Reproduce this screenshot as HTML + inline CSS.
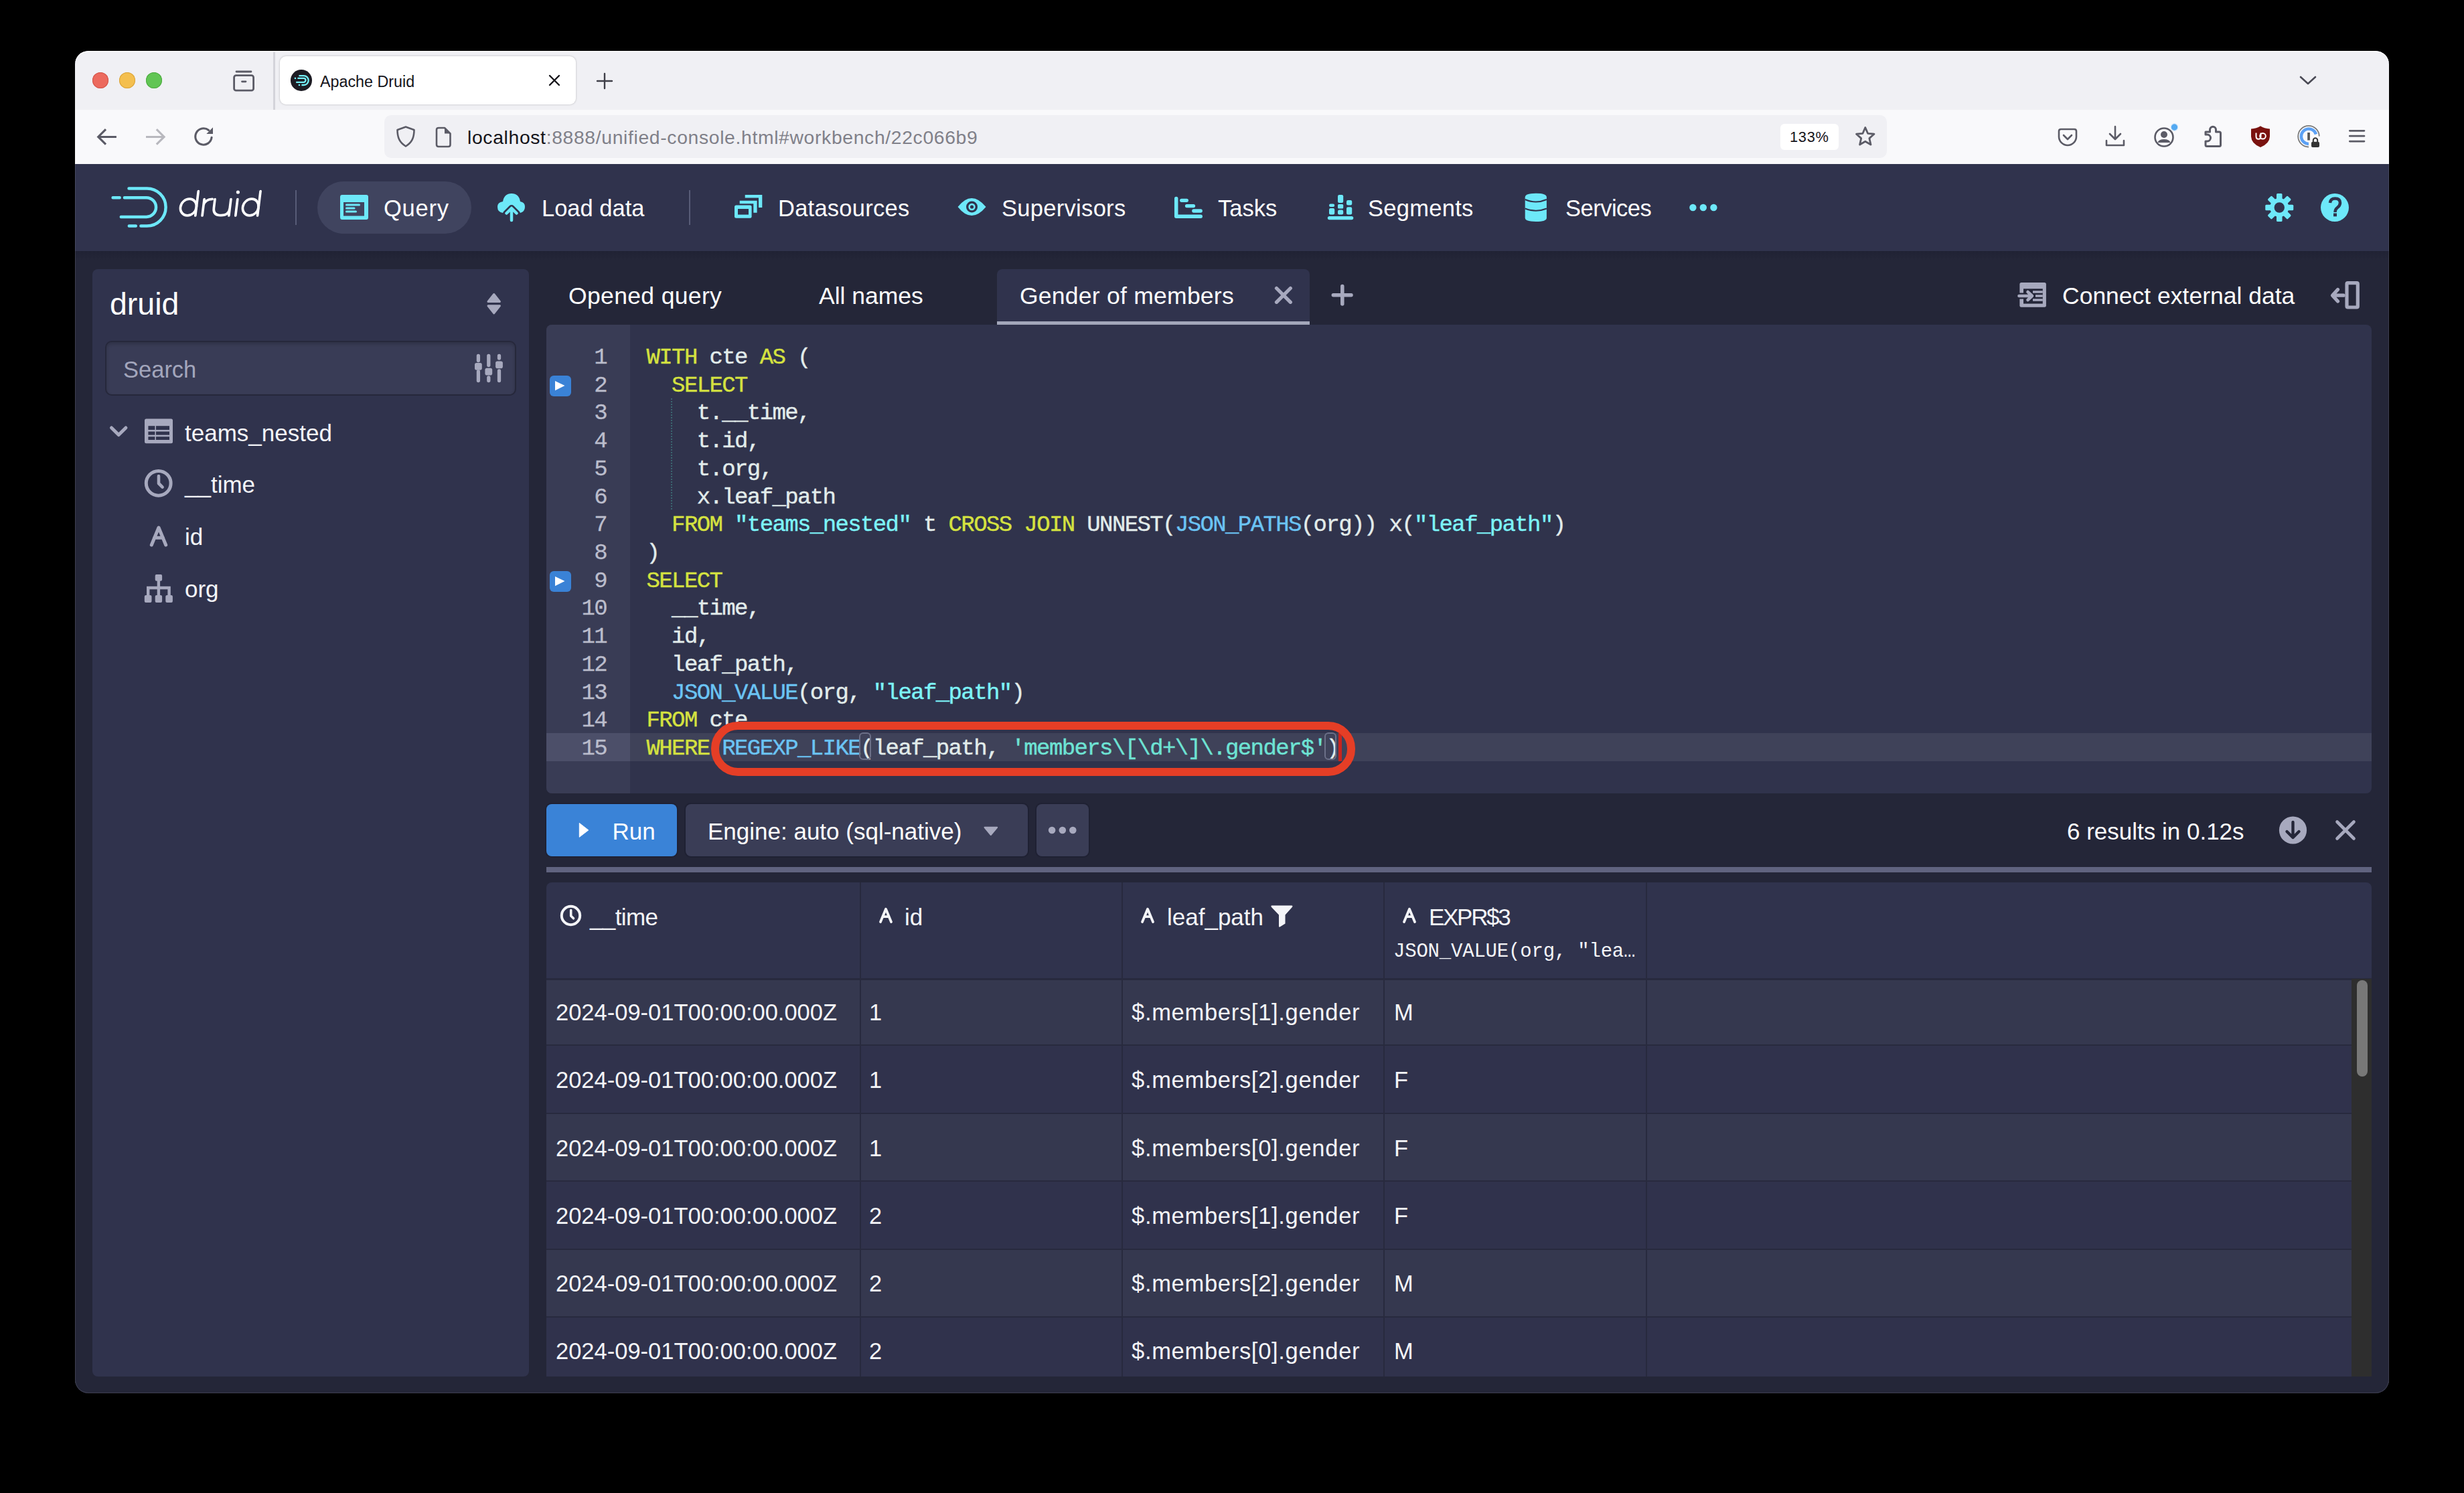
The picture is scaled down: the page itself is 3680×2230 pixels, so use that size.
<!DOCTYPE html>
<html><head><meta charset="utf-8">
<style>
*{box-sizing:border-box;margin:0;padding:0}
html,body{width:3680px;height:2230px;background:#000;overflow:hidden;font-family:"Liberation Sans",sans-serif;-webkit-font-smoothing:antialiased}
#win{position:absolute;left:112px;top:76px;width:3456px;height:2005px;border-radius:20px;overflow:hidden;background:#242638}
#pg{position:absolute;left:-112px;top:-76px;width:3680px;height:2230px}
.a{position:absolute}
.t{position:absolute;white-space:pre;line-height:1}
.mono{font-family:"Liberation Mono",monospace}
svg{position:absolute;overflow:visible}
.side{font-size:35px;color:#F4F5F8}
.tab{top:424.5px;font-size:35.5px;color:#fff}
.ln{left:797px;width:109px;text-align:right;font-size:34px;color:#BBBDCC}
.code{left:965.5px;font-size:34px;letter-spacing:-1.61px;color:#E2ECEB;-webkit-text-stroke:0.4px currentColor;margin-top:-1px}
.ck{color:#D5E240}.ci{color:#E2ECEB}.cf{color:#6BC4F4}.cs{color:#7DF4F8}.cq{color:#6EE3D4}
.ln{letter-spacing:-1.61px;-webkit-text-stroke:0.3px currentColor;margin-top:-1px}
.btn{top:1223.5px;font-size:35px;color:#fff}
.th{top:1352px;font-size:35px;color:#F4F5F8}
.td{font-size:34.5px;color:#F4F5F8}
.nav{top:294px;font-size:34.5px;color:#fff}
</style></head>
<body>
<div id="win"><div id="pg">
<!-- ===== browser chrome ===== -->
<div class="a" style="left:112px;top:76px;width:3456px;height:88px;background:#F0F0F4"></div>
<div class="a" style="left:112px;top:164px;width:3456px;height:81px;background:#F9F9FB"></div>
<!-- traffic lights -->
<div class="a" style="left:138px;top:108px;width:24px;height:24px;border-radius:50%;background:#EC6A5E;box-shadow:inset 0 0 0 1px #D2554A"></div>
<div class="a" style="left:178px;top:108px;width:24px;height:24px;border-radius:50%;background:#F4BF4F;box-shadow:inset 0 0 0 1px #D9A33A"></div>
<div class="a" style="left:218px;top:108px;width:24px;height:24px;border-radius:50%;background:#61C554;box-shadow:inset 0 0 0 1px #4DAA40"></div>
<!-- sidebar toggle icon -->
<svg style="left:344px;top:100px" width="40" height="40" viewBox="344 100 40 40"><path d="M353 107 H375" stroke="#5B5B66" stroke-width="2.8" stroke-linecap="round"/><rect x="349.6" y="112.6" width="29" height="22.6" rx="3" fill="none" stroke="#5B5B66" stroke-width="2.8"/><path d="M361.5 121.8 H367" stroke="#5B5B66" stroke-width="2.8" stroke-linecap="round"/></svg>
<div class="a" style="left:408px;top:77px;width:3px;height:87px;background:#D4D4DA"></div>
<!-- active tab -->
<div class="a" style="left:418px;top:84px;width:442px;height:72px;border-radius:9px;background:#FFFFFF;box-shadow:0 0 3px rgba(0,0,0,0.25)"></div>
<div class="a" style="left:434px;top:104px;width:31.7px;height:31.7px;border-radius:50%;background:#1D1C24"></div>
<svg style="left:434px;top:104px" width="32" height="32" viewBox="0 0 32 32"><path d="M12.4 9.1 H19.75 A6.95 6.95 0 0 1 19.75 23 H16.4 M10.4 12.9 H19.55 A2.95 2.95 0 0 1 19.55 18.8 H8.2" fill="none" stroke="#74F0F8" stroke-width="2.3"/><rect x="5.8" y="11.75" width="2.3" height="2.3" fill="#74F0F8"/><rect x="11.8" y="21.85" width="2.3" height="2.3" fill="#74F0F8"/></svg>
<div class="t" style="left:478px;top:111px;font-size:23.3px;color:#15141A">Apache Druid</div>
<svg style="left:819px;top:111px" width="18" height="18" viewBox="0 0 18 18"><path d="M2 2 L16 16 M16 2 L2 16" stroke="#15141A" stroke-width="2.4" stroke-linecap="round"/></svg>
<svg style="left:890px;top:108px" width="26" height="26" viewBox="0 0 26 26"><path d="M13 2 V24 M2 13 H24" stroke="#3F3F48" stroke-width="2.4" stroke-linecap="round"/></svg>
<!-- tab list chevron -->
<svg style="left:3434px;top:112px" width="26" height="16" viewBox="0 0 26 16"><path d="M2 3 L13 13 L24 3" fill="none" stroke="#4A4A55" stroke-width="2.6" stroke-linecap="round" stroke-linejoin="round"/></svg>
<!-- nav buttons -->
<svg style="left:140px;top:188px" width="40" height="32" viewBox="140 188 40 32"><path d="M173.9 204.5 H147.5 M158 193.1 L146.7 204.4 L158 215.7" fill="none" stroke="#5B5B66" stroke-width="3.1" stroke-linejoin="miter"/></svg>
<svg style="left:214px;top:188px" width="40" height="32" viewBox="214 188 40 32"><path d="M218 204.5 H244.3 M233.8 193.1 L245.1 204.4 L233.8 215.7" fill="none" stroke="#B8B8BE" stroke-width="3.1"/></svg>
<svg style="left:286px;top:186px" width="38" height="36" viewBox="286 186 38 36"><path d="M316.1 205.2 A12.2 12.2 0 1 1 311.7 194.5" fill="none" stroke="#5B5B66" stroke-width="3.1" stroke-linecap="round"/><path d="M318 190.3 V200 H308.3 Z" fill="#5B5B66"/></svg>
<!-- url bar -->
<div class="a" style="left:574px;top:172px;width:2244px;height:64px;border-radius:10px;background:#F0F0F4"></div>
<svg style="left:590px;top:187px" width="32" height="34" viewBox="0 0 32 34"><path d="M16 2.5 L28.5 7 C28.5 19 25 26 16 31.5 C7 26 3.5 19 3.5 7 Z" fill="none" stroke="#5B5B66" stroke-width="2.6" stroke-linejoin="round"/></svg>
<svg style="left:649px;top:189px" width="26" height="32" viewBox="0 0 26 32"><path d="M3 5 Q3 2 6 2 H15 L23.5 10.5 V27 Q23.5 30 20.5 30 H6 Q3 30 3 27 Z" fill="none" stroke="#5B5B66" stroke-width="2.6" stroke-linejoin="round"/><path d="M15 2 V10.5 H23.5" fill="#5B5B66"/></svg>
<div class="t" style="left:698px;top:191px;font-size:28.3px;letter-spacing:0.66px;color:#15141A">localhost<span style="color:#808089">:8888/unified-console.html#workbench/22c066b9</span></div>
<div class="a" style="left:2659px;top:185px;width:87px;height:39px;border-radius:6px;background:#FFFFFF"></div>
<div class="t" style="left:2673px;top:194px;font-size:21.8px;letter-spacing:0.7px;color:#15141A">133%</div>
<svg style="left:2768px;top:187px" width="34" height="34" viewBox="0 0 34 34"><path d="M17.8 3.5 L21.6 12.3 L31 13.2 L23.9 19.6 L26 29 L17.8 24.2 L9.6 29 L11.7 19.6 L4.6 13.2 L14 12.3 Z" fill="none" stroke="#5B5B66" stroke-width="2.8" stroke-linejoin="round"/></svg>
<!-- toolbar icons right -->
<svg style="left:3071px;top:189px" width="34" height="34" viewBox="0 0 34 34"><path d="M4 7 Q4 4 7 4 H27 Q30 4 30 7 V15 A13 13 0 0 1 4 15 Z M11 13 L17 19 L23 13" fill="none" stroke="#5B5B66" stroke-width="2.6" stroke-linejoin="round" stroke-linecap="round"/></svg>
<svg style="left:3142px;top:186px" width="34" height="36" viewBox="0 0 34 36"><path d="M17 3 V22 M9 14 L17 22 L25 14 M4 24 V31 H30 V24" fill="none" stroke="#5B5B66" stroke-width="2.6" stroke-linejoin="round" stroke-linecap="round"/></svg>
<svg style="left:3216px;top:187px" width="34" height="34" viewBox="0 0 34 34"><circle cx="16" cy="18" r="13.5" fill="none" stroke="#5B5B66" stroke-width="2.6"/><circle cx="16" cy="14" r="5" fill="#5B5B66"/><path d="M6.5 26 Q8 21 16 21 Q24 21 25.5 26" fill="#5B5B66"/><circle cx="31.5" cy="3" r="5.3" fill="#54A9F1" stroke="#D6E9FB" stroke-width="1.2"/></svg>
<svg style="left:3286px;top:184px" width="38" height="40" viewBox="3286 184 38 40"><path d="M3294 197 H3300.5 V193.8 A4.5 4.5 0 0 1 3309.5 193.8 V197 H3314.5 Q3316.5 197 3316.5 199 V216.5 Q3316.5 218.5 3314.5 218.5 H3296 Q3294 218.5 3294 216.5 V211 H3296.5 A5 5 0 0 0 3296.5 201 H3294 Z" fill="none" stroke="#5B5B66" stroke-width="3" stroke-linejoin="round"/></svg>
<svg style="left:3358px;top:186px" width="36" height="36" viewBox="3358 186 36 36"><path d="M3376 188.2 Q3370 192 3362 192.5 V204 Q3362.5 214.5 3376 220 Q3389.5 214.5 3390 204 V192.5 Q3382 192 3376 188.2 Z" fill="#7A120F"/><path d="M3369.5 198.5 V203.5 Q3369.5 207.8 3373 207.8 Q3376.5 207.8 3376.5 203.5 V198.5" fill="none" stroke="#fff" stroke-width="2"/><circle cx="3379.5" cy="203.3" r="4.3" fill="none" stroke="#fff" stroke-width="2"/></svg>
<svg style="left:3428px;top:184px" width="40" height="40" viewBox="3428 184 40 40"><path d="M3448 219.5 A15.8 15.8 0 1 1 3463.8 203.5" fill="none" stroke="#7A7A7A" stroke-width="1.8"/><path d="M3448 215 A11.3 11.3 0 1 1 3459 200.5" fill="none" stroke="#5CA1F5" stroke-width="4.5"/><rect x="3446.2" y="198" width="3.7" height="11.5" fill="#555"/><rect x="3452" y="211.7" width="12" height="8.3" rx="2" fill="#333"/><path d="M3454.8 212 V209.5 A3.2 3.2 0 0 1 3461.2 209.5 V212" fill="none" stroke="#333" stroke-width="2"/></svg>
<svg style="left:3504px;top:190px" width="32" height="26" viewBox="3504 190 32 26"><path d="M3509.3 195.3 H3531 M3509.3 203.2 H3531 M3509.3 211.1 H3531" stroke="#5B5B66" stroke-width="2.7" stroke-linecap="round"/></svg>
<!-- ===== druid header ===== -->
<div class="a" style="left:112px;top:245px;width:3456px;height:130px;background:#30334D"></div>

<!-- logo -->
<svg style="left:160px;top:270px" width="100" height="80" viewBox="160 270 100 80"><path d="M192.5 281.4 H219.5 A28.1 28.1 0 0 1 219.5 337.6 H210.4 M192.8 337.6 H202.8 M185.9 295.2 H218.7 A14.35 14.35 0 0 1 218.7 323.9 H180.8 M168.6 295.2 H178.7" fill="none" stroke="#6DE8F9" stroke-width="4.5" stroke-linecap="round"/></svg>
<svg style="left:255px;top:275px" width="150" height="60" viewBox="255 275 150 60"><g transform="translate(0 323.5) skewX(-7) translate(0 -323.5)" fill="none" stroke="#fff" stroke-width="3.7" stroke-linecap="round" stroke-linejoin="round"><ellipse cx="279.7" cy="309.5" rx="11.9" ry="12.3"/><path d="M291.6 285.5 V322"/><path d="M301.9 297.5 V322 M301.9 306.5 Q303.5 297.4 313.9 297.4"/><path d="M317.8 297.5 V310.5 Q317.8 321.7 329.7 321.7 Q341.7 321.7 341.7 310.5 M341.7 297.5 V322"/><path d="M351.6 297.5 V322"/><ellipse cx="372.6" cy="309.5" rx="11.8" ry="12.3"/><path d="M384.4 285.5 V322"/></g><circle cx="355.4" cy="287" r="2.6" fill="#fff"/></svg>
<div class="a" style="left:441px;top:284px;width:2px;height:52px;background:#585C77"></div>
<!-- query pill -->
<div class="a" style="left:474px;top:271px;width:230px;height:78px;border-radius:39px;background:#40445F"></div>
<svg style="left:508px;top:291px" width="42" height="37" viewBox="0 0 42 37"><rect x="0" y="0" width="42" height="37" rx="3" fill="#6DE8F9"/><rect x="5" y="11" width="31" height="20.5" fill="#40445F"/><path d="M9.5 15 H28.5 M9.5 20 H21 M9.5 25 H23.5" stroke="#6DE8F9" stroke-width="3" stroke-linecap="round"/></svg>
<div class="t nav" style="left:573px;letter-spacing:0.75px">Query</div>
<!-- load data -->
<svg style="left:742px;top:288px" width="44" height="44" viewBox="0 0 44 44"><path d="M9 30 Q1 29 1 21 Q1 14 9 13 Q11 1 22 1 Q33 1 35 13 Q42 14 42 21 Q42 28 35 30 Z" fill="#6DE8F9"/><path d="M22 42 V24 M13.5 31 L22 22.5 L30.5 31" fill="none" stroke="#30334D" stroke-width="9" stroke-linecap="round" stroke-linejoin="round"/><path d="M22 41 V24 M14.5 30.5 L22 23 L29.5 30.5" fill="none" stroke="#6DE8F9" stroke-width="4.5" stroke-linecap="round" stroke-linejoin="round"/></svg>
<div class="t nav" style="left:809px;">Load data</div>
<div class="a" style="left:1029px;top:284px;width:2px;height:52px;background:#585C77"></div>
<!-- datasources -->
<svg style="left:1096px;top:290px" width="44" height="38" viewBox="0 0 44 38"><path d="M16.7 1 H42.3 V20 H37 V5.5 H16.7 Z" fill="#6DE8F9"/><path d="M8.7 9.8 H34.6 V27.7 H29.3 V14.3 H8.7 Z" fill="#6DE8F9"/><rect x="1" y="16.6" width="25.6" height="19.1" rx="2.5" fill="#6DE8F9"/><rect x="6" y="22" width="16" height="8.6" fill="#30334D"/></svg>
<div class="t nav" style="left:1162px;letter-spacing:0.25px">Datasources</div>
<!-- supervisors -->
<svg style="left:1430px;top:295px" width="44" height="30" viewBox="0 0 44 30"><path d="M0.5 14 Q21 -12 42.5 14 Q21 40 0.5 14 Z" fill="#6DE8F9"/><circle cx="21.5" cy="14" r="8.5" fill="#30334D"/><circle cx="21.5" cy="14" r="5.2" fill="#6DE8F9"/><circle cx="21.5" cy="14" r="2.6" fill="#30334D"/></svg>
<div class="t nav" style="left:1496px;letter-spacing:0.3px">Supervisors</div>
<!-- tasks -->
<svg style="left:1753px;top:293px" width="44" height="34" viewBox="1753 293 44 34"><path d="M1756.7 296.5 V323.2 H1793.2" fill="none" stroke="#6DE8F9" stroke-width="5.5" stroke-linecap="round" stroke-linejoin="round"/><path d="M1764.7 299.3 H1772.3 M1772.5 307.6 H1782.5 M1782.8 315 H1793.2" stroke="#6DE8F9" stroke-width="5.3" stroke-linecap="round"/></svg>
<div class="t nav" style="left:1819px;">Tasks</div>
<!-- segments -->
<svg style="left:1982px;top:290px" width="40" height="40" viewBox="1982 290 40 40"><path d="M1985.5 325.6 H2018.6" stroke="#6DE8F9" stroke-width="5.4" stroke-linecap="round"/><g fill="#6DE8F9"><rect x="1985" y="304.5" width="8.2" height="4.5" rx="2.2"/><rect x="1985" y="311" width="8.2" height="9.4" rx="2.2"/><rect x="1998" y="291" width="8.2" height="12" rx="2.2"/><rect x="1998" y="305" width="8.2" height="6.6" rx="1.5"/><rect x="1998" y="313.5" width="8.2" height="6.9" rx="2.2"/><rect x="2011" y="299" width="8.2" height="7.5" rx="2.2"/><rect x="2011" y="309.3" width="8.2" height="11.1" rx="2.2"/></g></svg>
<div class="t nav" style="left:2043px;letter-spacing:0.28px">Segments</div>
<!-- services -->
<svg style="left:2277px;top:288px" width="34" height="44" viewBox="0 0 34 44"><path d="M0.7 6.5 Q0.7 0.7 16.8 0.7 Q32.9 0.7 32.9 6.5 V37.5 Q32.9 43 16.8 43 Q0.7 43 0.7 37.5 Z" fill="#6DE8F9"/><path d="M0.7 10 Q16.8 17 32.9 10 M0.7 23.5 Q16.8 30 32.9 23.5" fill="none" stroke="#30334D" stroke-width="2.2"/></svg>
<div class="t nav" style="left:2338px;letter-spacing:-0.5px">Services</div>
<svg style="left:2520px;top:302px" width="48" height="16" viewBox="2520 302 48 16"><circle cx="2528.4" cy="310" r="5.2" fill="#6DE8F9"/><circle cx="2543.8" cy="310" r="5.2" fill="#6DE8F9"/><circle cx="2559.4" cy="310" r="5.2" fill="#6DE8F9"/></svg>
<!-- gear / help -->
<svg style="left:3383px;top:289px" width="42" height="42" viewBox="0 0 42 42"><g fill="#6DE8F9"><rect x="17" y="0" width="8.5" height="42" rx="1.5"/><rect x="17" y="0" width="8.5" height="42" rx="1.5" transform="rotate(45 21.25 21)"/><rect x="17" y="0" width="8.5" height="42" rx="1.5" transform="rotate(90 21.25 21)"/><rect x="17" y="0" width="8.5" height="42" rx="1.5" transform="rotate(135 21.25 21)"/><circle cx="21.25" cy="21" r="14"/></g><circle cx="21.25" cy="21" r="7.7" fill="#30334D"/></svg>
<svg style="left:3466px;top:289px" width="42" height="42" viewBox="0 0 42 42"><circle cx="21" cy="21" r="21" fill="#6DE8F9"/><path d="M14 14 Q14.5 7.5 21.5 7.5 Q29 7.5 29 14 Q29 18 25 21 Q21.5 23.5 21.5 28" fill="none" stroke="#30334D" stroke-width="4.5"/><rect x="19" y="29.5" width="5" height="4.8" fill="#30334D"/></svg>

<!-- ===== main area ===== -->
<div class="a" style="left:112px;top:375px;width:3456px;height:1706px;background:#242638"></div>
<div class="a" style="left:112px;top:375px;width:3456px;height:14px;background:linear-gradient(#202234,rgba(36,38,56,0))"></div>
<!-- sidebar -->
<div class="a" style="left:138px;top:402px;width:652px;height:1654px;border-radius:8px;background:#30334D"></div>
<div class="t" style="left:164px;top:431px;font-size:46.5px;color:#fff">druid</div>
<svg style="left:726px;top:437px" width="24" height="34" viewBox="726 437 24 34"><path d="M729 450.5 L737.7 439.5 L746.4 450.5 Z M729 456.8 L737.7 467.8 L746.4 456.8 Z" fill="#A7A9BE" stroke="#A7A9BE" stroke-width="3" stroke-linejoin="round"/></svg>
<div class="a" style="left:157px;top:509px;width:614px;height:82px;border-radius:10px;background:#393C56;border:2px solid #26283B;box-shadow:inset 0 3px 5px rgba(0,0,0,0.18)"></div>
<div class="t" style="left:184px;top:535px;font-size:34.5px;color:#A3A6BC">Search</div>
<svg style="left:708px;top:528px" width="44" height="44" viewBox="708 528 44 44"><g stroke="#A7A9BE" stroke-width="5.3" stroke-linecap="round"><path d="M714.4 531.5 V538.5 M714.4 555 V568.5 M729.8 531.5 V545.5 M729.8 564 V568.5 M745.5 531.5 V535 M745.5 554 V568.5"/></g><g fill="#A7A9BE"><rect x="709" y="542" width="10.8" height="10.8" rx="2.8"/><rect x="724.4" y="549.7" width="10.8" height="10.8" rx="2.8"/><rect x="740.1" y="539.4" width="10.8" height="10.8" rx="2.8"/></g></svg>
<!-- tree -->
<svg style="left:162px;top:634px" width="30" height="20" viewBox="162 634 30 20"><path d="M166.5 639 L177.2 649.5 L187.9 639" fill="none" stroke="#A7A9BE" stroke-width="5" stroke-linecap="round" stroke-linejoin="round"/></svg>
<svg style="left:216px;top:625px" width="43" height="38" viewBox="216 625 43 38"><rect x="216" y="625.6" width="42" height="36.6" rx="2.5" fill="#A7A9BE"/><g fill="#30334D"><rect x="221.4" y="636.2" width="10" height="5.8"/><rect x="233" y="636.2" width="20" height="5.8"/><rect x="221.4" y="644.6" width="10" height="5"/><rect x="233" y="644.6" width="20" height="5"/><rect x="221.4" y="652.2" width="10" height="4.8"/><rect x="233" y="652.2" width="20" height="4.8"/></g></svg>
<div class="t side" style="left:276px;top:629px">teams_nested</div>
<svg style="left:214px;top:699px" width="46" height="46" viewBox="214 699 46 46"><circle cx="236.7" cy="721.8" r="18.4" fill="none" stroke="#A7A9BE" stroke-width="5"/><path d="M237 711 V722 L242.6 727.6" fill="none" stroke="#A7A9BE" stroke-width="4.6" stroke-linecap="round" stroke-linejoin="round"/></svg>
<div class="t side" style="left:276px;top:706px">__time</div>
<svg style="left:222px;top:784px" width="30" height="34" viewBox="222 784 30 34"><path d="M226.3 814 L237 788 L247.7 814 M230.5 803.3 H243.5" fill="none" stroke="#A7A9BE" stroke-width="5" stroke-linecap="round" stroke-linejoin="round"/></svg>
<div class="t side" style="left:276px;top:784px">id</div>
<svg style="left:215px;top:857px" width="44" height="44" viewBox="215 857 44 44"><g fill="#A7A9BE"><rect x="231.7" y="858" width="10.4" height="9.8" rx="2"/><rect x="215.8" y="889" width="10.7" height="11" rx="2"/><rect x="231.7" y="889" width="10.4" height="11" rx="2"/><rect x="247.3" y="889" width="10.6" height="11" rx="2"/></g><path d="M236.9 866 V878 M221.2 890 V878 H252.6 V890 M236.9 878 V890" fill="none" stroke="#A7A9BE" stroke-width="4.4"/></svg>
<div class="t side" style="left:276px;top:862px">org</div>

<!-- ===== editor tabs ===== -->
<div class="t tab" style="left:849px;letter-spacing:0.35px">Opened query</div>
<div class="t tab" style="left:1223px;">All names</div>
<div class="a" style="left:1489px;top:402px;width:467px;height:83px;border-radius:8px 8px 0 0;background:#30334D"></div>
<div class="a" style="left:1489px;top:480px;width:467px;height:5px;background:#A3A7BA"></div>
<div class="t tab" style="left:1523px;letter-spacing:0.25px">Gender of members</div>
<svg style="left:1900px;top:424px" width="34" height="34" viewBox="1900 424 34 34"><path d="M1906.5 430.5 L1927.3 451.3 M1927.3 430.5 L1906.5 451.3" stroke="#A7A9BE" stroke-width="5.3" stroke-linecap="round"/></svg>
<svg style="left:1986px;top:424px" width="36" height="34" viewBox="1986 424 36 34"><path d="M2004.8 427.5 V454 M1991.3 440.8 H2018" stroke="#A7A9BE" stroke-width="5.5" stroke-linecap="round"/></svg>
<svg style="left:3012px;top:420px" width="46" height="42" viewBox="3012 420 46 42"><rect x="3016.4" y="422" width="39.5" height="36.7" rx="2.5" fill="#A7A9BE"/><rect x="3022" y="431.3" width="28.8" height="22.3" fill="#242638"/><path d="M3036 436 H3050.8 M3040 442 H3050.8 M3036 448 H3050.8" stroke="#A7A9BE" stroke-width="3.6"/><path d="M3015.5 442 H3034" stroke="#242638" stroke-width="9" stroke-linecap="round"/><path d="M3015.5 442 H3034 M3028.5 436 L3035 442 L3028.5 448" fill="none" stroke="#A7A9BE" stroke-width="4.6" stroke-linecap="round" stroke-linejoin="round"/></svg>
<div class="t tab" style="left:3080px;">Connect external data</div>
<svg style="left:3478px;top:418px" width="50" height="46" viewBox="3478 418 50 46"><rect x="3505" y="422.6" width="16.3" height="36.4" rx="1.5" fill="none" stroke="#A7A9BE" stroke-width="5.2"/><path d="M3484 441.2 H3500 M3491.5 432.5 L3483.5 441.2 L3491.5 450" fill="none" stroke="#A7A9BE" stroke-width="5.2" stroke-linecap="round" stroke-linejoin="round"/></svg>
<!-- ===== editor ===== -->
<div class="a" style="left:816px;top:485px;width:2726px;height:700px;border-radius:8px;background:#30334C;overflow:hidden">
  <div class="a" style="left:0;top:0;width:125px;height:700px;background:#393C55"></div>
  <div class="a" style="left:0;top:610px;width:2726px;height:42px;background:#3F4259"></div>
  <div class="a" style="left:0;top:610px;width:125px;height:42px;background:#4C4F69"></div>
</div>
<div class="a" style="left:1002px;top:595px;width:0;height:166px;border-left:2px dotted #3B6670"></div>

<div class="t mono ln" style="top:517.9px">1</div>
<div class="t mono code" style="top:517.9px"><span class="ck">WITH</span><span class="ci"> cte </span><span class="ck">AS</span><span class="ci"> (</span></div>
<div class="t mono ln" style="top:559.7px">2</div>
<div class="t mono code" style="top:559.7px"><span class="ci">  </span><span class="ck">SELECT</span></div>
<div class="t mono ln" style="top:601.4px">3</div>
<div class="t mono code" style="top:601.4px"><span class="ci">    t.__time,</span></div>
<div class="t mono ln" style="top:643.1px">4</div>
<div class="t mono code" style="top:643.1px"><span class="ci">    t.id,</span></div>
<div class="t mono ln" style="top:684.8px">5</div>
<div class="t mono code" style="top:684.8px"><span class="ci">    t.org,</span></div>
<div class="t mono ln" style="top:726.5px">6</div>
<div class="t mono code" style="top:726.5px"><span class="ci">    x.leaf_path</span></div>
<div class="t mono ln" style="top:768.3px">7</div>
<div class="t mono code" style="top:768.3px"><span class="ci">  </span><span class="ck">FROM</span><span class="ci"> </span><span class="cs">&quot;teams_nested&quot;</span><span class="ci"> t </span><span class="ck">CROSS</span><span class="ci"> </span><span class="ck">JOIN</span><span class="ci"> UNNEST(</span><span class="cf">JSON_PATHS</span><span class="ci">(org)) x(</span><span class="cs">&quot;leaf_path&quot;</span><span class="ci">)</span></div>
<div class="t mono ln" style="top:810.0px">8</div>
<div class="t mono code" style="top:810.0px"><span class="ci">)</span></div>
<div class="t mono ln" style="top:851.7px">9</div>
<div class="t mono code" style="top:851.7px"><span class="ck">SELECT</span></div>
<div class="t mono ln" style="top:893.4px">10</div>
<div class="t mono code" style="top:893.4px"><span class="ci">  __time,</span></div>
<div class="t mono ln" style="top:935.1px">11</div>
<div class="t mono code" style="top:935.1px"><span class="ci">  id,</span></div>
<div class="t mono ln" style="top:976.9px">12</div>
<div class="t mono code" style="top:976.9px"><span class="ci">  leaf_path,</span></div>
<div class="t mono ln" style="top:1018.6px">13</div>
<div class="t mono code" style="top:1018.6px"><span class="ci">  </span><span class="cf">JSON_VALUE</span><span class="ci">(org, </span><span class="cs">&quot;leaf_path&quot;</span><span class="ci">)</span></div>
<div class="t mono ln" style="top:1060.3px">14</div>
<div class="t mono code" style="top:1060.3px"><span class="ck">FROM</span><span class="ci"> cte</span></div>
<div class="t mono ln" style="top:1102.0px">15</div>
<div class="t mono code" style="top:1102.0px"><span class="ck">WHERE</span><span class="ci"> </span><span class="cf">REGEXP_LIKE</span><span class="ci">(leaf_path, </span><span class="cq">&#x27;members\[\d+\]\.gender$&#x27;</span><span class="ci">)</span></div>
<div class="a" style="left:821px;top:561.0px;width:32px;height:31px;border-radius:6px;background:#3A82D6"></div>
<svg style="left:828px;top:568.9px" width="16" height="16" viewBox="0 0 16 16"><path d="M1 0 L15.5 7.1 L1 14.2 Z" fill="#fff"/></svg>
<div class="a" style="left:821px;top:853.0px;width:32px;height:31px;border-radius:6px;background:#3A82D6"></div>
<svg style="left:828px;top:860.9px" width="16" height="16" viewBox="0 0 16 16"><path d="M1 0 L15.5 7.1 L1 14.2 Z" fill="#fff"/></svg>

<div class="a" style="left:1978px;top:1094px;width:17.5px;height:41px;border-radius:6px;border:2px solid #6C7088"></div>
<div class="a" style="left:1283px;top:1094px;width:17.5px;height:41px;border-radius:6px;border:2px solid #6C7088"></div>
<div class="a" style="left:1999px;top:1095px;width:4.5px;height:42px;background:#C8241E"></div>
<div class="a" style="left:1062px;top:1078px;width:962px;height:81px;border-radius:40px;border:12px solid #E53E26"></div>

<!-- ===== run bar ===== -->
<div class="a" style="left:816px;top:1201px;width:195px;height:78px;border-radius:8px;background:#3A83D7;box-shadow:0 0 0 2px #1F2133"></div>
<svg style="left:864px;top:1228px" width="16" height="24" viewBox="0 0 16 24"><path d="M1.3 1.4 L14.8 11.9 L1.3 22.3 Z" fill="#fff" stroke="#fff" stroke-width="1" stroke-linejoin="round"/></svg>
<div class="t btn" style="left:914.5px;">Run</div>
<div class="a" style="left:1024px;top:1201px;width:511px;height:78px;border-radius:8px;background:#3A3D56;box-shadow:0 0 0 2px #1F2133"></div>
<div class="t btn" style="left:1057px;">Engine: auto (sql-native)</div>
<svg style="left:1466px;top:1232px" width="28" height="20" viewBox="1466 1232 28 20"><path d="M1470.5 1235.8 H1489.2 L1479.8 1247 Z" fill="#A7A9BE" stroke="#A7A9BE" stroke-width="2" stroke-linejoin="round"/></svg>
<div class="a" style="left:1548px;top:1201px;width:78px;height:78px;border-radius:8px;background:#3A3D56;box-shadow:0 0 0 2px #1F2133"></div>
<svg style="left:1560px;top:1230px" width="54" height="20" viewBox="1560 1230 54 20"><g fill="#A7A9BE"><circle cx="1571.1" cy="1240" r="5.3"/><circle cx="1586.8" cy="1240" r="5.3"/><circle cx="1602.3" cy="1240" r="5.3"/></g></svg>
<div class="t btn" style="left:3087px;">6 results in 0.12s</div>
<svg style="left:3402px;top:1217px" width="46" height="46" viewBox="3402 1217 46 46"><circle cx="3424.5" cy="1240" r="20.6" fill="#A7A9BE"/><path d="M3424.5 1228 V1250.5 M3415.5 1242 L3424.5 1251 L3433.5 1242" fill="none" stroke="#242638" stroke-width="4.4" stroke-linecap="round" stroke-linejoin="round"/></svg>
<svg style="left:3487px;top:1224px" width="32" height="32" viewBox="3487 1224 32 32"><path d="M3490.5 1227.5 L3515.5 1252.5 M3515.5 1227.5 L3490.5 1252.5" stroke="#A7A9BE" stroke-width="4.6" stroke-linecap="round"/></svg>
<div class="a" style="left:816px;top:1295px;width:2726px;height:8px;background:#60637F"></div>
<!-- ===== table ===== -->
<div class="a" style="left:816px;top:1318px;width:2726px;height:738px;border-radius:8px 8px 0 0;background:#30334D;overflow:hidden">

<div class="a" style="left:0;top:143.8px;width:2696px;height:98.4px;background:#35384F;border-top:2px solid #282A3E"></div>
<div class="a" style="left:0;top:242.2px;width:2696px;height:101.3px;background:#30324C;border-top:2px solid #282A3E"></div>
<div class="a" style="left:0;top:343.5px;width:2696px;height:101.5px;background:#35384F;border-top:2px solid #282A3E"></div>
<div class="a" style="left:0;top:445.0px;width:2696px;height:101.5px;background:#30324C;border-top:2px solid #282A3E"></div>
<div class="a" style="left:0;top:546.5px;width:2696px;height:101.5px;background:#35384F;border-top:2px solid #282A3E"></div>
<div class="a" style="left:0;top:648.0px;width:2696px;height:101.5px;background:#30324C;border-top:2px solid #282A3E"></div>
<div class="a" style="left:0;top:143.3px;width:2726px;height:2.5px;background:#282A3E"></div>
<div class="a" style="left:468px;top:0;width:2px;height:738px;background:#282A3E"></div>
<div class="a" style="left:859px;top:0;width:2px;height:738px;background:#282A3E"></div>
<div class="a" style="left:1250px;top:0;width:2px;height:738px;background:#282A3E"></div>
<div class="a" style="left:1642px;top:0;width:2px;height:738px;background:#282A3E"></div>
<div class="a" style="left:2696px;top:144px;width:30px;height:600px;background:#2E2E2E"></div>
<div class="a" style="left:2704px;top:146px;width:16px;height:144px;border-radius:8px;background:#787878"></div>
</div>

<svg style="left:834px;top:1349px" width="38" height="38" viewBox="834 1349 38 38"><circle cx="852.5" cy="1367.5" r="13.7" fill="none" stroke="#F4F5F8" stroke-width="4"/><path d="M852.7 1359.5 V1368 L856.5 1371.8" fill="none" stroke="#F4F5F8" stroke-width="3.6" stroke-linecap="round" stroke-linejoin="round"/></svg>
<div class="t th" style="left:881px;letter-spacing:-0.6px">__time</div>
<svg style="left:1310px;top:1353px" width="26" height="30" viewBox="1310 1353 26 30"><path d="M1315 1377 L1323 1357.8 L1331 1377 M1318.2 1369.2 H1327.8" fill="none" stroke="#F4F5F8" stroke-width="3.8" stroke-linecap="round" stroke-linejoin="round"/></svg>
<div class="t th" style="left:1351px;">id</div>
<svg style="left:1701px;top:1353px" width="26" height="30" viewBox="1310 1353 26 30"><path d="M1315 1377 L1323 1357.8 L1331 1377 M1318.2 1369.2 H1327.8" fill="none" stroke="#F4F5F8" stroke-width="3.8" stroke-linecap="round" stroke-linejoin="round"/></svg>
<div class="t th" style="left:1743px;">leaf_path</div>
<svg style="left:1896px;top:1350px" width="36" height="36" viewBox="1896 1350 36 36"><path d="M1899.5 1352.5 H1929 Q1931.5 1352.8 1929.8 1355 L1919.5 1366.5 V1379.5 L1911.5 1384.5 Q1910 1385 1910 1383.5 V1366.5 L1899 1355 Q1897.5 1352.8 1899.5 1352.5 Z" fill="#F4F5F8"/></svg>
<svg style="left:2092px;top:1353px" width="26" height="30" viewBox="1310 1353 26 30"><path d="M1315 1377 L1323 1357.8 L1331 1377 M1318.2 1369.2 H1327.8" fill="none" stroke="#F4F5F8" stroke-width="3.8" stroke-linecap="round" stroke-linejoin="round"/></svg>
<div class="t th" style="left:2134px;letter-spacing:-2.3px">EXPR$3</div>
<div class="t mono" style="left:2081px;top:1407px;font-size:29px;letter-spacing:-0.2px;color:#F4F5F8">JSON_VALUE(org, "lea…</div>

<div class="t td" style="left:830px;top:1495.1px">2024-09-01T00:00:00.000Z</div>
<div class="t td" style="left:1298px;top:1495.1px">1</div>
<div class="t td" style="left:1690px;top:1495.1px;letter-spacing:0.7px">$.members[1].gender</div>
<div class="t td" style="left:2082px;top:1495.1px">M</div>
<div class="t td" style="left:830px;top:1596.4px">2024-09-01T00:00:00.000Z</div>
<div class="t td" style="left:1298px;top:1596.4px">1</div>
<div class="t td" style="left:1690px;top:1596.4px;letter-spacing:0.7px">$.members[2].gender</div>
<div class="t td" style="left:2082px;top:1596.4px">F</div>
<div class="t td" style="left:830px;top:1697.9px">2024-09-01T00:00:00.000Z</div>
<div class="t td" style="left:1298px;top:1697.9px">1</div>
<div class="t td" style="left:1690px;top:1697.9px;letter-spacing:0.7px">$.members[0].gender</div>
<div class="t td" style="left:2082px;top:1697.9px">F</div>
<div class="t td" style="left:830px;top:1799.4px">2024-09-01T00:00:00.000Z</div>
<div class="t td" style="left:1298px;top:1799.4px">2</div>
<div class="t td" style="left:1690px;top:1799.4px;letter-spacing:0.7px">$.members[1].gender</div>
<div class="t td" style="left:2082px;top:1799.4px">F</div>
<div class="t td" style="left:830px;top:1900.4px">2024-09-01T00:00:00.000Z</div>
<div class="t td" style="left:1298px;top:1900.4px">2</div>
<div class="t td" style="left:1690px;top:1900.4px;letter-spacing:0.7px">$.members[2].gender</div>
<div class="t td" style="left:2082px;top:1900.4px">M</div>
<div class="t td" style="left:830px;top:2001.3px">2024-09-01T00:00:00.000Z</div>
<div class="t td" style="left:1298px;top:2001.3px">2</div>
<div class="t td" style="left:1690px;top:2001.3px;letter-spacing:0.7px">$.members[0].gender</div>
<div class="t td" style="left:2082px;top:2001.3px">M</div>
</div><div style="position:absolute;left:0;top:0;width:3456px;height:2005px;border-radius:20px;box-shadow:inset 0 1.5px 0 0 #FFFFFF;pointer-events:none"></div><div style="position:absolute;left:0;top:169px;width:3456px;height:1836px;border-radius:0 0 20px 20px;border:1.5px solid rgba(150,150,165,0.22);border-top:none;pointer-events:none"></div></div>
</body></html>
